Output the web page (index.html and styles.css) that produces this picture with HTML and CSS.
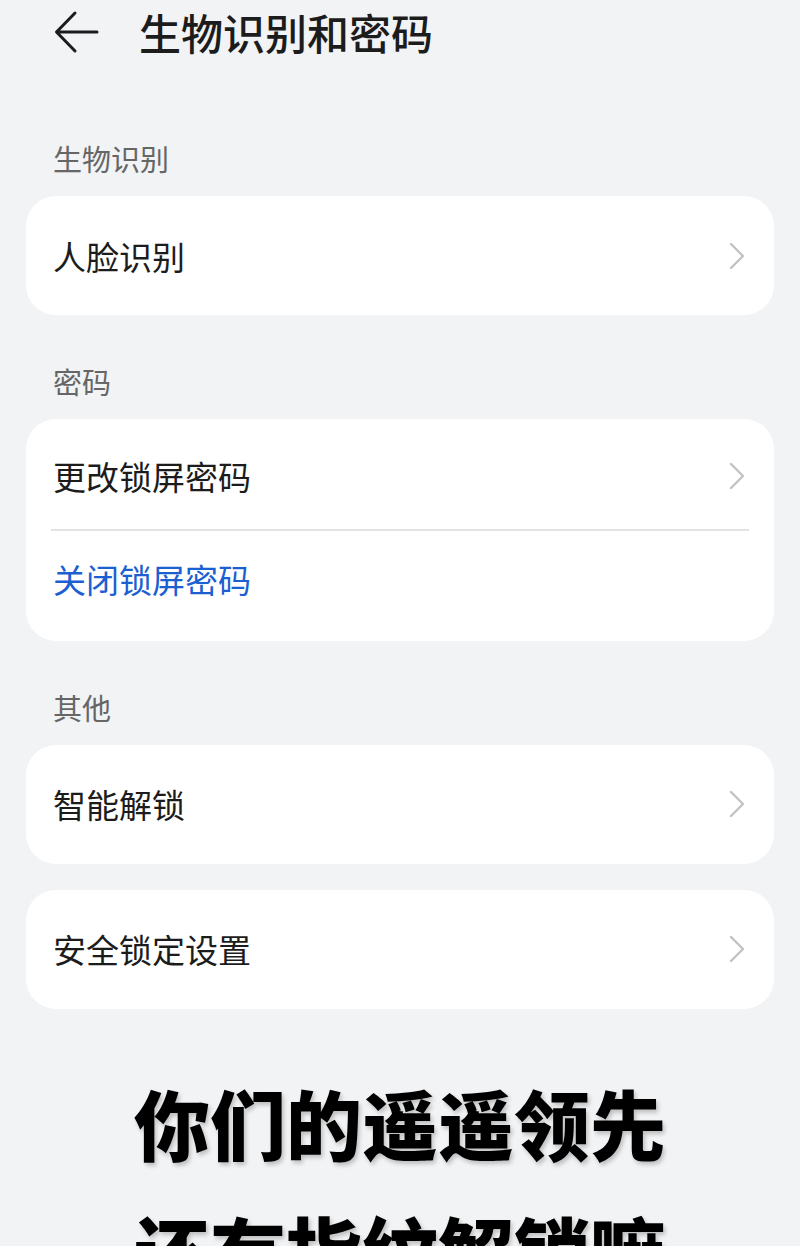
FILE: index.html
```html
<!DOCTYPE html>
<html lang="zh-CN">
<head>
  <meta charset="UTF-8">
  <meta name="viewport" content="width=device-width, initial-scale=1.0">
  <title>生物识别和密码</title>
  <link rel="stylesheet" href="styles.css">
</head>
<body>
  <div id="page">
    <div class="top-bar">
      <svg class="back-icon" width="45" height="44" viewBox="0 0 45 44">
        <path d="M43 22 H3 M21 3 L2.5 22 L21 41" fill="none" stroke="#1c1c1c" stroke-width="3" stroke-linecap="round" stroke-linejoin="round"/>
      </svg>
      <h1 class="title">生物识别和密码</h1>
    </div>

    <div class="section-label first">生物识别</div>
    <div class="card">
      <div class="row">
        <span class="row-text">人脸识别</span>
        <svg class="chevron" width="16" height="28" viewBox="0 0 16 28"><path d="M2 2 L14 14 L2 26" fill="none" stroke="#c2c2c2" stroke-width="2.4" stroke-linecap="round" stroke-linejoin="round"/></svg>
      </div>
    </div>

    <div class="section-label">密码</div>
    <div class="card group">
      <div class="row">
        <span class="row-text">更改锁屏密码</span>
        <svg class="chevron" width="16" height="28" viewBox="0 0 16 28"><path d="M2 2 L14 14 L2 26" fill="none" stroke="#c2c2c2" stroke-width="2.4" stroke-linecap="round" stroke-linejoin="round"/></svg>
      </div>
      <div class="divider"></div>
      <div class="row last">
        <span class="row-text link">关闭锁屏密码</span>
      </div>
    </div>

    <div class="section-label">其他</div>
    <div class="card">
      <div class="row">
        <span class="row-text">智能解锁</span>
        <svg class="chevron" width="16" height="28" viewBox="0 0 16 28"><path d="M2 2 L14 14 L2 26" fill="none" stroke="#c2c2c2" stroke-width="2.4" stroke-linecap="round" stroke-linejoin="round"/></svg>
      </div>
    </div>
    <div class="card spaced">
      <div class="row">
        <span class="row-text">安全锁定设置</span>
        <svg class="chevron" width="16" height="28" viewBox="0 0 16 28"><path d="M2 2 L14 14 L2 26" fill="none" stroke="#c2c2c2" stroke-width="2.4" stroke-linecap="round" stroke-linejoin="round"/></svg>
      </div>
    </div>

    <div class="caption">
      <p>你们的遥遥领先</p>
      <p>还有指纹解锁嘛</p>
    </div>
  </div>
</body>
</html>
```

FILE: styles.css
```css
body {
  margin: 0;
  padding: 0;
  background-color: #f1f3f5;
  font-family: "Noto Sans CJK SC", "Noto Sans", sans-serif;
  color: #1c1c1c;
  overflow: hidden;
}
#page {
  width: 800px;
}
.top-bar {
  display: flex;
  align-items: center;
  height: 63px;
  padding-left: 54px;
}
.back-icon {
  display: block;
}
.title {
  margin: 0 0 0 40px;
  font-size: 42px;
  font-weight: 500;
  line-height: 63px;
  color: #1c1c1c;
}
.section-label {
  height: 40px;
  line-height: 40px;
  margin: 46px 0 18px;
  padding-left: 53px;
  font-size: 29px;
  color: #666;
}
.section-label.first {
  margin-top: 75px;
}
.card {
  margin: 0 26px;
  background-color: white;
  border-radius: 30px;
  padding: 4px 0;
}
.card.group {
  padding-bottom: 14px;
}
.card.spaced {
  margin-top: 26px;
}
.row {
  display: flex;
  align-items: center;
  justify-content: space-between;
  min-height: 111px;
  padding: 0 29px 0 27px;
}
.group .row {
  min-height: 106px;
}
.group .row.last {
  min-height: 96px;
}
.row-text {
  font-size: 33px;
  color: #1c1c1c;
}
.row-text.link {
  color: #1b5fd1;
}
.chevron {
  display: block;
}
.divider {
  height: 1.5px;
  margin: 0 25px;
  background-color: #e3e3e3;
}
.caption {
  margin-top: 50px;
  text-align: center;
}
.caption p {
  margin: 0;
  font-size: 76px;
  font-weight: 900;
  line-height: 127px;
  color: #000;
  text-shadow: 2px 3px 4px rgba(0, 0, 0, 0.22);
}
```
